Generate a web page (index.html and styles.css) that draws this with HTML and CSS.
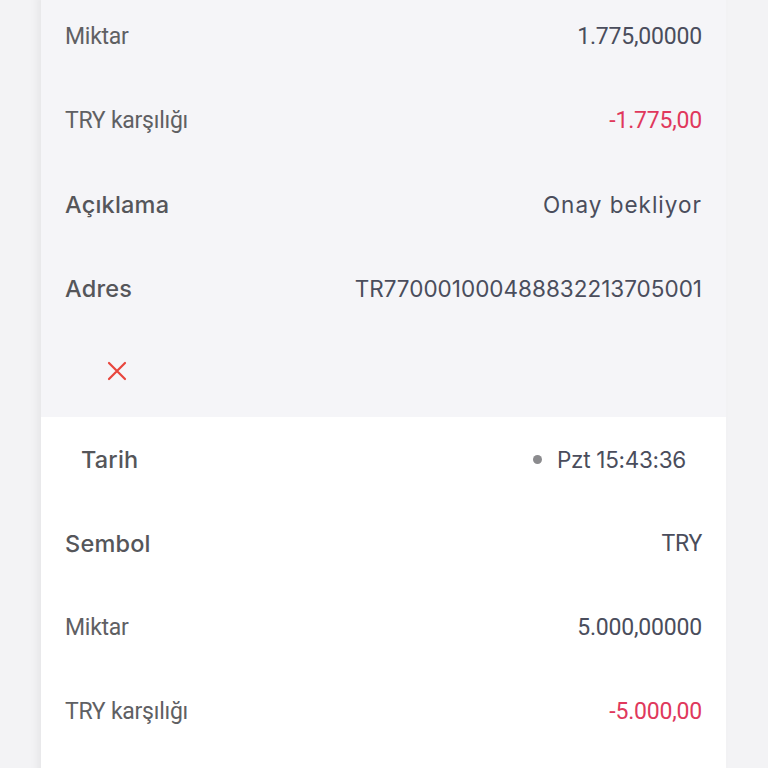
FILE: index.html
```html
<!DOCTYPE html>
<html>
<head>
  <title>İşlem detayı</title>
  <link rel="stylesheet" href="styles.css">
</head>
<body>
  <div class="panel">
    <div class="card card-open">
      <div class="row">
        <span class="label">Miktar</span>
        <span class="value">1.775,00000</span>
      </div>
      <div class="row">
        <span class="label">TRY karşılığı</span>
        <span class="value neg">-1.775,00</span>
      </div>
      <div class="row">
        <span class="label strong">Açıklama</span>
        <span class="value round status">Onay bekliyor</span>
      </div>
      <div class="row">
        <span class="label strong">Adres</span>
        <span class="value round">TR770001000488832213705001</span>
      </div>
      <div class="row actions">
        <button class="cancel" type="button" aria-label="İptal">
          <svg viewBox="0 0 20 20" width="20" height="20">
            <path d="M2 2 L18 18 M18 2 L2 18" stroke="#e8453c" stroke-width="2.2" stroke-linecap="round" fill="none"/>
          </svg>
        </button>
      </div>
    </div>

    <div class="card card-last">
      <div class="row row-head">
        <span class="label strong">Tarih</span>
        <span class="value round time"><i class="dot"></i>Pzt 15:43:36</span>
      </div>
      <div class="row">
        <span class="label strong">Sembol</span>
        <span class="value">TRY</span>
      </div>
      <div class="row">
        <span class="label">Miktar</span>
        <span class="value">5.000,00000</span>
      </div>
      <div class="row">
        <span class="label">TRY karşılığı</span>
        <span class="value neg">-5.000,00</span>
      </div>
    </div>
  </div>
</body>
</html>
```

FILE: styles.css
```css
body {
  margin: 0;
  background: #f3f3f5;
  font-family: Roboto, "Noto Sans", sans-serif;
}

.panel {
  margin-left: 41px;
  width: 685px;
  box-shadow: -4px 0 8px rgba(0, 0, 0, 0.05);
}

.card { background: #fff; }
.card-open { background: #f5f5f8; margin-top: -6px; }
.card-last { padding-bottom: 40px; }

.row {
  display: flex;
  align-items: center;
  justify-content: space-between;
  height: 84px;
  padding: 0 24px;
}

.row-head { padding: 0 40px; }

.actions { height: 87px; padding: 0 0 6px; box-sizing: border-box; }

.label {
  font-size: 23px;
  letter-spacing: -0.25px;
  color: #5f6063;
}
.label.strong {
  font-family: Inter, sans-serif;
  font-weight: 500;
  font-size: 23.5px;
  letter-spacing: 0.2px;
  color: #55565a;
}

.value {
  font-size: 23px;
  letter-spacing: -0.2px;
  color: #4a4d5c;
  display: flex;
  align-items: center;
}
.value.round {
  font-family: Inter, sans-serif;
  font-size: 22.5px;
  letter-spacing: 0;
}
.value.status { letter-spacing: 1px; }
.value.time { letter-spacing: -0.3px; }
.value.neg { color: #e0385c; }

.dot {
  width: 9px;
  height: 9px;
  border-radius: 50%;
  background: #8b8b8e;
  margin-right: 15px;
}

.cancel {
  margin-left: 66px;
  padding: 0;
  border: 0;
  background: none;
  width: 20px;
  height: 20px;
  display: flex;
}
```
